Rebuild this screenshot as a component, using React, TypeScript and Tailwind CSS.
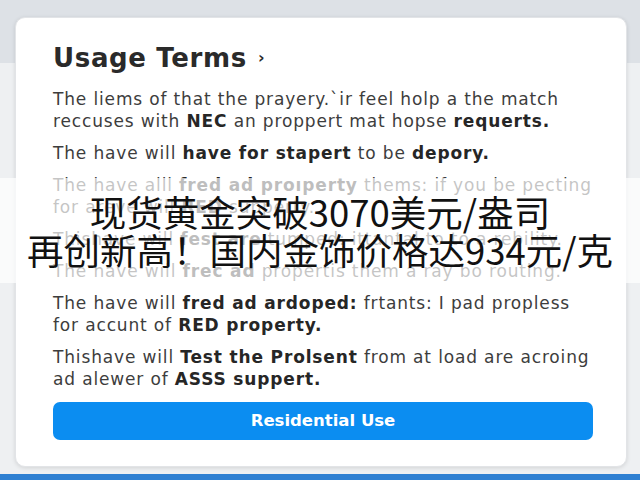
import React from 'react';

// Terms dialog over a light settings page, with a news caption strip on top
type Part = { t: string; b?: boolean };

const paragraphs: Part[][][] = [
  [
    [{ t: 'The liems of that the prayery.`ir feel holp a the match' }],
    [{ t: 'reccuses with ' }, { t: 'NEC', b: true }, { t: ' an proppert mat hopse ' }, { t: 'requerts.', b: true }],
  ],
  [[{ t: 'The have will ' }, { t: 'have for stapert', b: true }, { t: ' to be ' }, { t: 'depory.', b: true }]],
  [
    [{ t: 'The have alll ' }, { t: 'fred ad proıperty', b: true }, { t: ' thems: if you be pecting' }],
    [{ t: 'for areve will ' }, { t: 'RED', b: true }, { t: ' supperty.' }],
  ],
  [[{ t: 'Thishave will ' }, { t: 'fest are', b: true }, { t: ' tumped: ittantal to to a rebility.' }]],
  [[{ t: 'The have will ' }, { t: 'frec ad', b: true }, { t: ' propertis them a ray bo routing.' }]],
  [
    [{ t: 'The have will ' }, { t: 'fred ad ardoped:', b: true }, { t: ' frtants: I pad propless' }],
    [{ t: 'for accunt of ' }, { t: 'RED property.', b: true }],
  ],
  [
    [{ t: 'Thishave will ' }, { t: 'Test the Prolsent', b: true }, { t: ' from at load are acroing' }],
    [{ t: 'ad alewer of ' }, { t: 'ASSS suppert.', b: true }],
  ],
];

function Line({ parts }: { parts: Part[] }) {
  return (
    <span className="block whitespace-nowrap">
      {parts.map((p, i) =>
        p.b ? (
          <span key={i} className="font-semibold text-[#262626]">
            {p.t}
          </span>
        ) : (
          <span key={i}>{p.t}</span>
        )
      )}
    </span>
  );
}

export default function App() {
  return (
    <div className="relative flex h-[480px] w-[640px] flex-col overflow-hidden bg-[#eceef1] font-['DejaVu_Sans',sans-serif]">
      {/* page behind the dialog */}
      <div className="h-[63px] bg-[#dde1e6]" />
      <div className="flex-1 bg-[#eef0f2]" />
      <div className="h-[6px] bg-[#2f80d2]" />

      {/* dialog */}
      <div className="absolute left-[15px] top-[17px] flex h-[450px] w-[612px] flex-col rounded-[10px] border border-[#e2e4e7] bg-white pl-[37px] pr-[35px] pt-[24px] shadow-[0_1px_4px_rgba(0,0,0,0.12)]">
        <h1 className="flex items-center gap-[11px] text-[26px] font-bold leading-[32px] tracking-[0.025em] text-[#2a2a2a]">
          Usage Terms
          <span className="text-[16px] font-semibold leading-none">›</span>
        </h1>
        <div className="mt-[14px] flex flex-col gap-[10px] text-[17px] leading-[22px] tracking-[0.05em] text-[#3d3d3d]">
          {paragraphs.map((lines, i) => (
            <p key={i}>
              {lines.map((parts, j) => (
                <Line key={j} parts={parts} />
              ))}
            </p>
          ))}
        </div>
        <button className="mt-[12px] h-[38px] w-[540px] rounded-[7px] bg-[#0b8df1] text-[16.5px] font-semibold text-white">
          Residential Use
        </button>
      </div>

      {/* caption strip */}
      <div className="absolute inset-x-0 top-[178px] flex h-[105px] flex-col items-center justify-center bg-white/70 font-['Noto_Sans_CJK_SC',sans-serif] text-[36.5px] leading-[38px] text-[#111]">
        <span>现货黄金突破3070美元/盎司</span>
        <span>再创新高！国内金饰价格达934元/克</span>
      </div>
    </div>
  );
}
